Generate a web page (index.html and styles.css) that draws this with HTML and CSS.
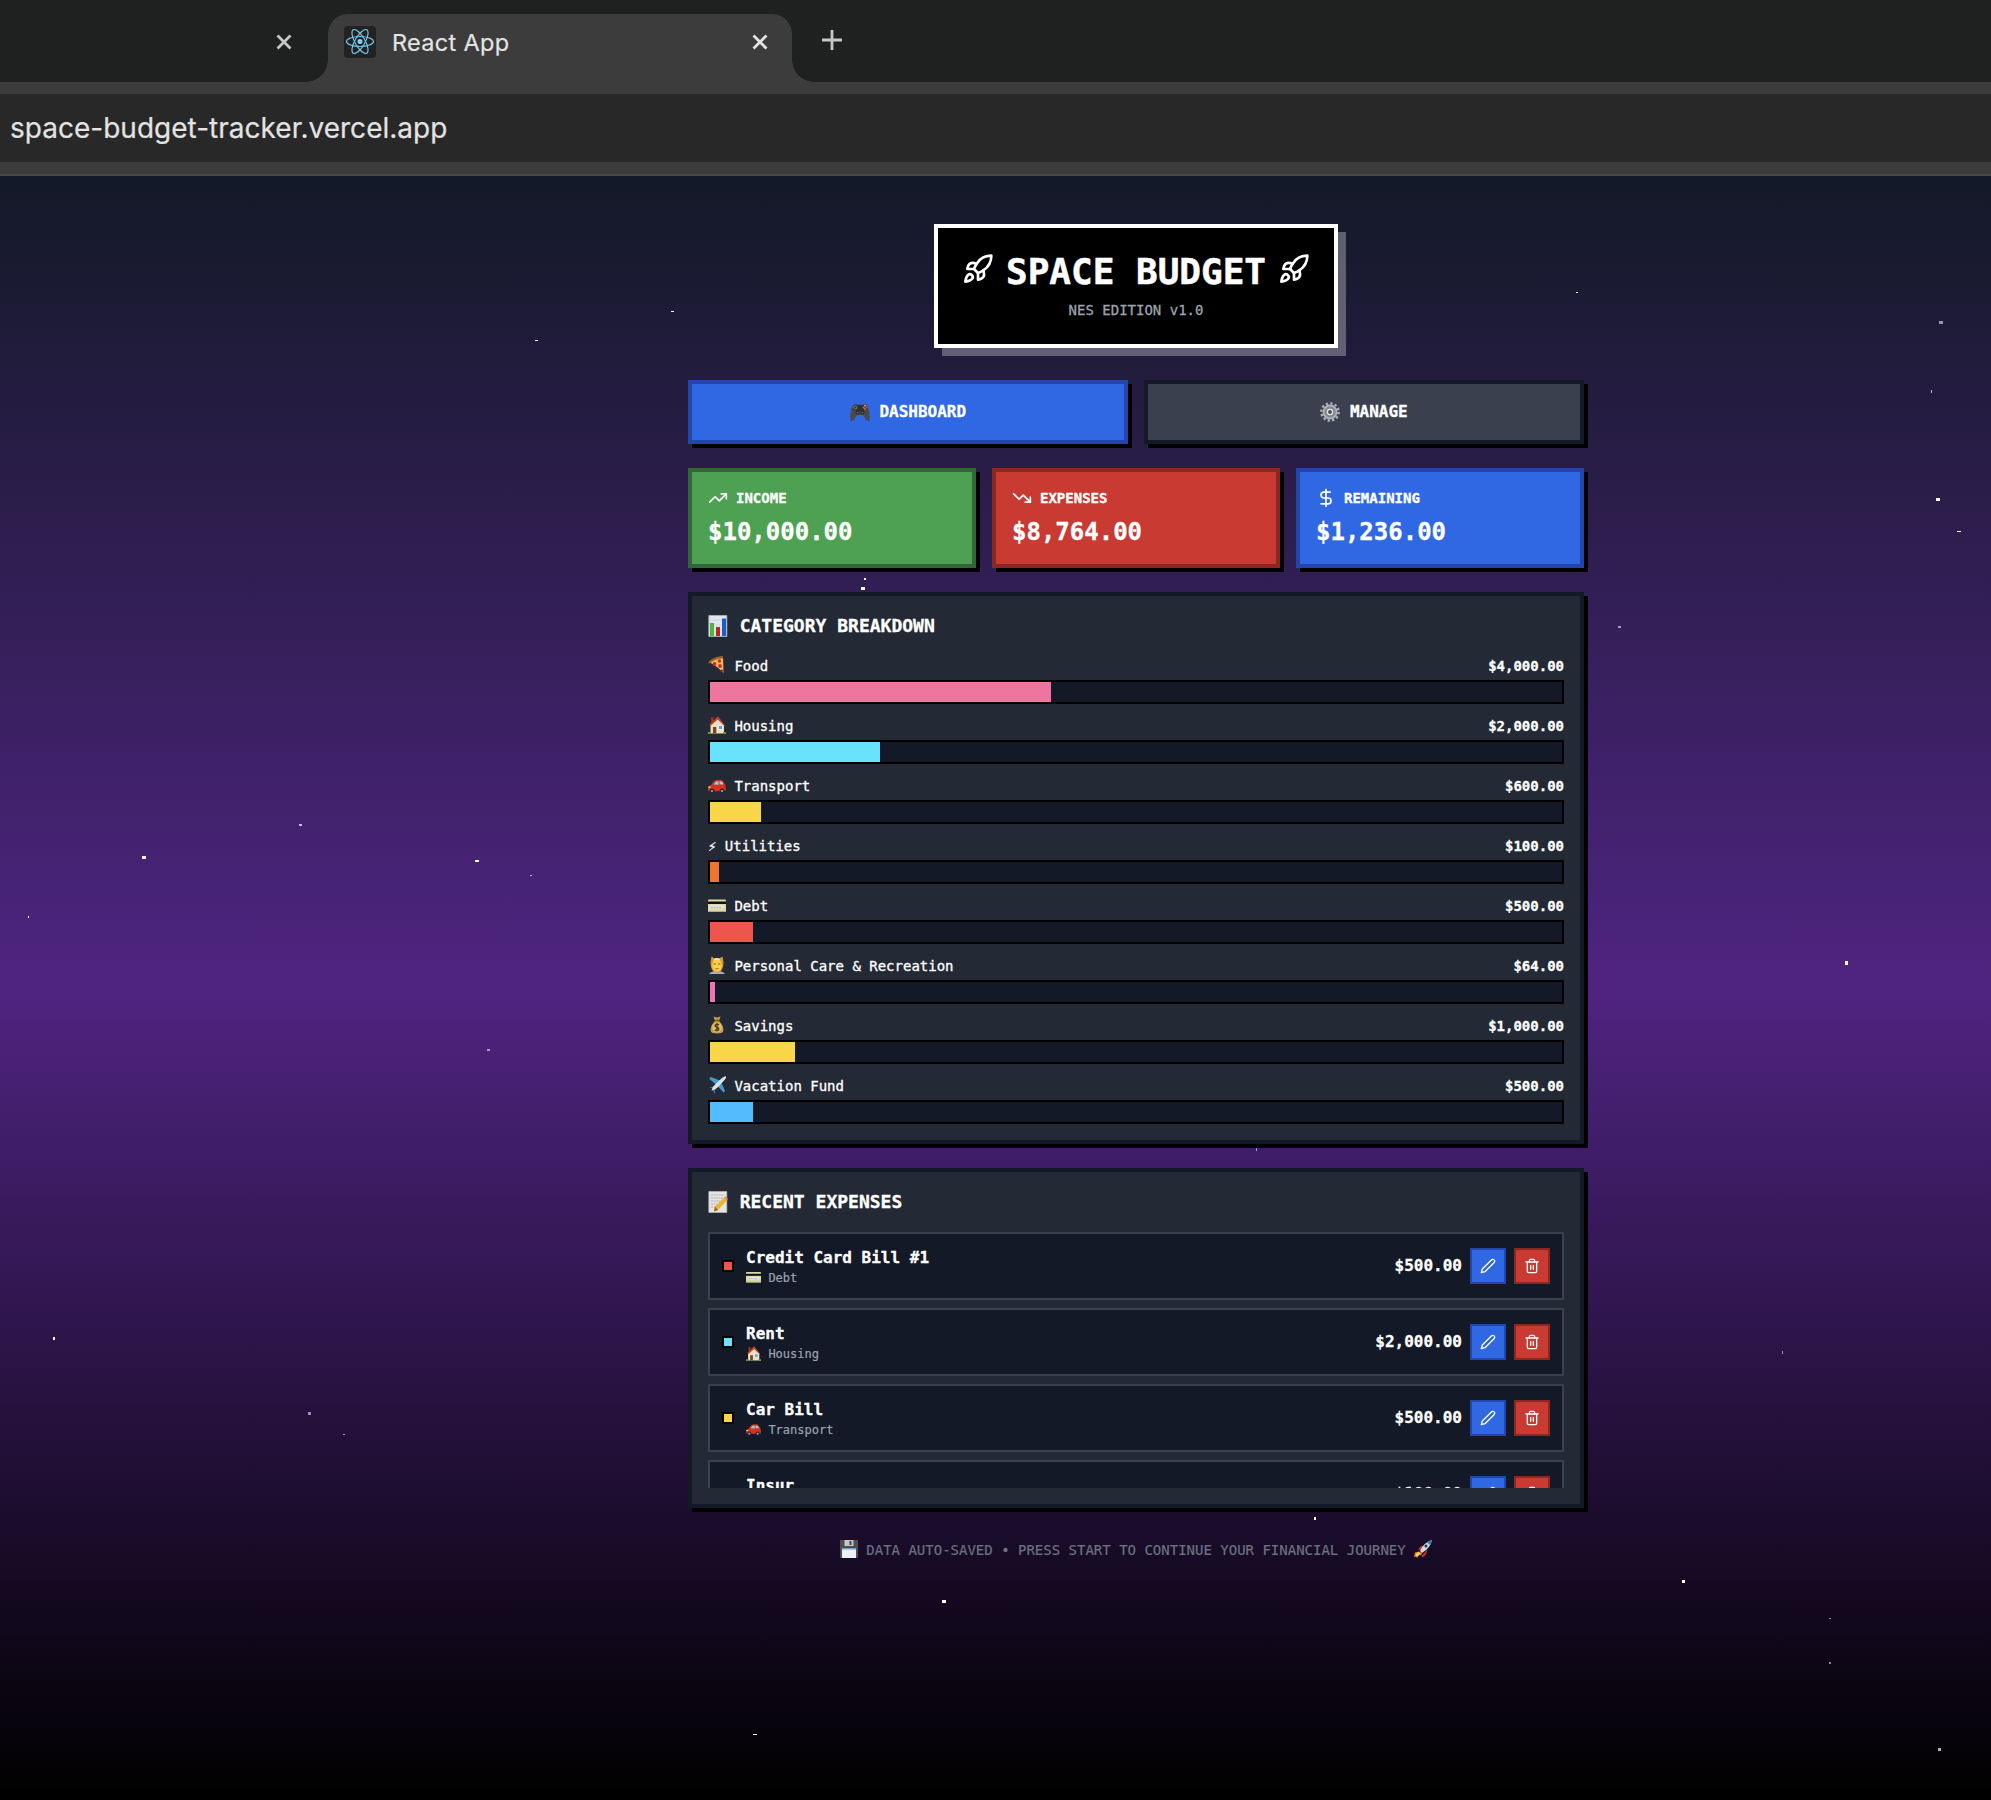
FILE: index.html
```html
<!DOCTYPE html>
<html lang="en">
<head>
<meta charset="utf-8">
<title>React App</title>
<link rel="stylesheet" href="styles.css">
</head>
<body>
<svg class="defs" width="0" height="0" aria-hidden="true">
  <symbol id="rocket" viewBox="0 0 24 24"><path d="M4.5 16.5c-1.5 1.26-2 5-2 5s3.74-.5 5-2c.71-.84.7-2.13-.09-2.91a2.18 2.18 0 0 0-2.91-.09z"/><path d="m12 15-3-3a22 22 0 0 1 2-3.95A12.88 12.88 0 0 1 22 2c0 2.72-.78 7.5-6 11a22.35 22.35 0 0 1-4 2z"/><path d="M9 12H4s.55-3.03 2-4c1.62-1.08 5 0 5 0"/><path d="M12 15v5s3.03-.55 4-2c1.08-1.62 0-5 0-5"/></symbol>
  <symbol id="up" viewBox="0 0 24 24"><path d="M22 7 13.5 15.5 8.5 10.5 2 17"/><path d="M16 7h6v6"/></symbol>
  <symbol id="down" viewBox="0 0 24 24"><path d="M22 17 13.5 8.5 8.5 13.5 2 7"/><path d="M16 17h6v-6"/></symbol>
  <symbol id="dollar" viewBox="0 0 24 24"><path d="M12 2v20"/><path d="M17 5H9.5a3.5 3.5 0 0 0 0 7h5a3.5 3.5 0 0 1 0 7H6"/></symbol>
  <symbol id="pencil" viewBox="0 0 24 24"><path d="M17 3a2.85 2.83 0 1 1 4 4L7.500 20.500 2 22l1.500-5.500Z"/></symbol>
  <symbol id="trash" viewBox="0 0 24 24"><path d="M3 6h18"/><path d="M19 6v14c0 1-1 2-2 2H7c-1 0-2-1-2-2V6"/><path d="M8 6V4c0-1 1-2 2-2h4c1 0 2 1 2 2v2"/><path d="M10 11v6M14 11v6"/></symbol>
  <symbol id="e-pad" viewBox="0 0 20 20"><path d="M4 2.500Q5 1.500 7 2.500h6Q15 1.500 16 2.500 18.500 4 19 9q1.300 6.500.5 9-1.500 2-3.500-.5L13 13H7l-3 4.500Q2 20 .5 18-.3 15 1 9 1.500 4 4 2.500Z" fill="#4a4a4c"/><path d="M4 3.300h12l1.500 4L13 9H7L2.500 7.300Z" fill="#303033"/><circle cx="5.300" cy="5.500" r="2" fill="#707478"/><circle cx="5.300" cy="5.500" r="1" fill="#333"/><circle cx="7.500" cy="10.500" r="2" fill="#222"/><circle cx="12.500" cy="10.500" r="2" fill="#222"/><circle cx="7.500" cy="10.500" r="1" fill="#66696c"/><circle cx="12.500" cy="10.500" r="1" fill="#66696c"/><circle cx="15" cy="3.800" r="1" fill="#d9a52c"/><circle cx="13.500" cy="5.400" r="1" fill="#4f8db9"/><circle cx="16.500" cy="5.400" r="1" fill="#dc5038"/><circle cx="15" cy="7" r="1" fill="#e4662c"/></symbol>
  <symbol id="e-gear" viewBox="0 0 20 20"><circle cx="10" cy="10" r="8.700" fill="none" stroke="#b3b4bc" stroke-width="2.300" stroke-dasharray="2.300 2.255"/><circle cx="10" cy="10" r="6.600" fill="#85878f" stroke="#b4b6be" stroke-width="1.800"/><circle cx="10" cy="10" r="2.600" fill="#4a4d58" stroke="#e6e7eb" stroke-width="1.300"/></symbol>
  <symbol id="e-chart" viewBox="0 0 20 22"><path d="M.8.500h18v21H.8z" fill="#dfe6ef" stroke="#a9b4c3" stroke-width=".8"/><path d="M1 5h18M1 10h18M1 15h18" stroke="#bdc8d6" stroke-width=".5"/><path d="M2 8h4v13H2z" fill="#4fb53b"/><path d="M8 12h4v9H8z" fill="#b42a20"/><path d="M14 3.500h4V21h-4z" fill="#1d5cc0"/></symbol>
  <symbol id="e-pizza" viewBox="0 0 18 18"><path d="M1 6Q7 .5 15 1l.5 16Q9 10 1 6Z" fill="#eebb62"/><path d="M0 6.500Q6 0 15 0v2.500Q7 2.500 2 7.500Z" fill="#a65e27"/><circle cx="6.500" cy="8" r="1.900" fill="#c53224"/><circle cx="11.500" cy="5" r="1.800" fill="#c53224"/><circle cx="12" cy="10" r="1.900" fill="#c53224"/><circle cx="14" cy="14.800" r="1.300" fill="#b52a1c"/></symbol>
  <symbol id="e-house" viewBox="0 0 18 18"><path d="M3 1h2.500v5H3z" fill="#983022"/><path d="M2.500 8 9.500 2l6.500 7v8.500H2.500Z" fill="#f0dfbd"/><path d="m1.500 8.500 7.500-7.500L10.500 1 17 9.500l-1 .3L9.800 3.500l-6.800 6Z" fill="#b8452e"/><path d="M5 11h3.300v6.500H5z" fill="#784526"/><path d="M10.500 9.500h4v4h-4z" fill="#5b9ed4" stroke="#fff" stroke-width=".7"/><path d="M0 16h3v2H0zM15 16h3v2h-3z" fill="#6c983c"/></symbol>
  <symbol id="e-car" viewBox="0 0 18 18"><path d="M0 12q0-3 3-4l3-4Q9 2 14 3l3 4q1.500 4 .5 7l-16 .5Q0 14 0 12Z" fill="#d8301f"/><path d="M5.500 7.500 8 4.500l2.500-.3v3.500ZM11.500 4.200q2 0 3 .8l1 2.500h-4Z" fill="#9ccadd"/><circle cx="4" cy="14" r="2.500" fill="#272a2e"/><circle cx="14" cy="14" r="2.500" fill="#272a2e"/><circle cx="4" cy="14" r="1.100" fill="#a2a8ad"/><circle cx="14" cy="14" r="1.100" fill="#a2a8ad"/><path d="M.3 9.500h2.300v1.300H.3z" fill="#f6e68c"/></symbol>
  <symbol id="e-card" viewBox="0 0 18 18"><rect y="2.500" width="18" height="12.500" rx="1" fill="#dcd9a8"/><path d="M0 4.500h18v2.500H0z" fill="#111"/><path d="M2 8.500h14v2.800H2z" fill="#e9ebe5"/><path d="M3 10.300h10" stroke="#879ad0" stroke-width=".8" stroke-dasharray="2 .7"/><path d="M0 14h18v1H0z" fill="#b0ad82"/></symbol>
  <symbol id="e-spa" viewBox="0 0 18 18"><path d="M1 18q2-3 8-3t8 3Z" fill="#a9b1ba"/><path d="M3.500.5 6 2h6L14.500.5 15.500 6q0 6-2.500 9-4 3-8 0-2.500-3-2.500-9Z" fill="#d7962e"/><ellipse cx="9" cy="9.300" rx="4.800" ry="6.500" fill="#f8cd4c"/><path d="M5 4.500Q9-.5 13 4.500L9 3.500Z" fill="#e9eef2"/><path d="M5.500 8h2.500M10 8h2.500M7.500 12.500q1.500.8 3 0" stroke="#935b19" stroke-width=".9" fill="none"/></symbol>
  <symbol id="e-bag" viewBox="0 0 18 18"><path d="M5.500.5 9 1.500 12.500.5 11 5q5 5 4.300 10-.3 2.500-6.300 2.500T2.700 15Q2 10 7 5Z" fill="#c39a46"/><path d="M6.500 4.500h5" stroke="#735019" stroke-width="1.300"/><ellipse cx="9" cy="11.500" rx="5" ry="5" fill="#dfbc68"/><path d="M11 9q-2-1.300-3.500-.3-1.200 1.500 1.500 2.500 2.500 1 1.500 2.700-1.500 1.300-3.700 0M9 7v8.500" stroke="#463b1e" stroke-width="1.300" fill="none"/></symbol>
  <symbol id="e-plane" viewBox="0 0 18 18"><path d="M1 2.500 3 1l9 3.500L14.500 9 17 15l-1.500 1.500L9.500 10Z" fill="#429ad3"/><path d="M1 11.500 4.500 12l1.500 5 1 .5L6.800 12 5.500 10.500Z" fill="#3684bf"/><path d="M3.500 14.500Q4 11 8 7.500L14 2q3-2.300 4-1.700T16.500 4L11 10q-3.500 4-7.500 4.500Z" fill="#dce4ea"/></symbol>
  <symbol id="e-memo" viewBox="0 0 20 22"><path d="M.8.500h18v21H.8z" fill="#e5e5e3" stroke="#b9b9b5" stroke-width=".7"/><path d="M3 4h13M3 7h12M3 10h9M3 13h6M3 16h4" stroke="#aaa" stroke-width=".9" stroke-dasharray="2 .6"/><path d="m7 15.500 9-9 3 3-9 9.500-4 1.500Z" fill="#edb52d"/><path d="m16 6.500 1.500-1.300 2.300 2.500L19 9.500Z" fill="#e77f79"/><path d="m7 15.500 3 3.500-4 1.500Z" fill="#8e6b38"/></symbol>
  <symbol id="e-disk" viewBox="0 0 18 18"><path d="M0 0h18v18H0z" fill="#4c4e50"/><path d="M4.500 0h9v6h-9z" fill="#c5c7c8"/><path d="M9.500 1h2v4h-2z" fill="#45474a"/><path d="M2 8h14v10H2z" fill="#f1f2f3"/><path d="M2 8h14v1.500H2z" fill="#64a4dd"/></symbol>
  <symbol id="e-rocket" viewBox="0 0 18 18"><path d="M4 9.500 7 6l5 0-4 5ZM7.500 16 12 11l0-2 1 2q-.5 4-4.500 6.500Z" fill="#c33422"/><path d="M6 11Q9 3 18 0 16.500 8 8 13Z" fill="#c9d9e5"/><path d="M13 2.500Q15 .8 18 0q-.5 3-2 5Z" fill="#3b79ac"/><circle cx="12" cy="6" r="1.500" fill="#34353c"/><path d="M5 11.500 1 12.500 0 17.500 2 16l1 2 2-3 2 .5 1-2.500Z" fill="#f28a22"/><path d="m5 12-3 2-.5 2.500Q5 16 6 13.500Z" fill="#ffda5a"/></symbol>
</svg>

<header class="chrome">
  <div class="tabstrip">
    <div class="tab-prev"><svg class="close" viewBox="0 0 16 16"><path d="M1.500 1.500l13 13M14.500 1.500l-13 13"/></svg></div>
    <div class="tab">
      <svg class="favicon" viewBox="0 0 32 32"><rect width="32" height="32" rx="4" fill="#222"/><g fill="none" stroke="#74cdee" stroke-width="1.150"><ellipse cx="16" cy="15.500" rx="13.500" ry="5"/><ellipse cx="16" cy="15.500" rx="13.500" ry="5" transform="rotate(60 16 15.500)"/><ellipse cx="16" cy="15.500" rx="13.500" ry="5" transform="rotate(120 16 15.500)"/></g><circle cx="16" cy="15.500" r="2.500" fill="#74d6f8"/></svg>
      <span class="tab-title">React App</span>
      <svg class="close" viewBox="0 0 16 16"><path d="M1.500 1.500l13 13M14.500 1.500l-13 13"/></svg>
    </div>
    <svg class="plus" viewBox="0 0 20 20"><path d="M10 0v20M0 10h20"/></svg>
  </div>
  <div class="address"><span class="url">space-budget-tracker.vercel.app</span></div>
</header>

<div class="viewport">
  <svg class="stars" width="1991" height="1624" viewBox="0 176 1991 1624" fill="#fff">
    <path d="M671 311h3v1h-3zM535 340h3v1h-3zM1576 292h2v1h-2zM1936 498h4v3h-4zM1957 531h4v1h-4zM864 578h2v2h-2zM861 587h4v3h-4zM142 856h4v3h-4zM475 860h4v2h-4zM28 916h1v2h-1zM1845 961h3v4h-3zM53 1337h2v3h-2zM1314 1517h2v3h-2zM942 1600h4v3h-4zM1682 1580h3v3h-3zM753 1734h4v1h-4z"/>
    <path opacity=".7" d="M299 824h3v2h-3zM530 875h2v1h-2zM1931 390h1v3h-1zM1938 1748h3v3h-3z"/>
    <path opacity=".55" d="M1939 321h4v3h-4zM1618 626h3v2h-3zM487 1049h3v2h-3zM1256 1148h1v3h-1zM308 1412h3v3h-3zM343 1434h2v1h-2zM1782 1351h1v3h-1zM1829 1618h2v1h-2zM1829 1662h2v2h-2z"/>
  </svg>
  <main class="app">
    <div class="title-box">
      <h1><svg class="ico rocket"><use href="#rocket"/></svg><span>SPACE BUDGET</span><svg class="ico rocket"><use href="#rocket"/></svg></h1>
      <p>NES EDITION v1.0</p>
    </div>

    <nav class="tabs">
      <button class="btn blue"><svg class="emoji"><use href="#e-pad"/></svg>DASHBOARD</button>
      <button class="btn gray"><svg class="emoji"><use href="#e-gear"/></svg>MANAGE</button>
    </nav>

    <section class="cards">
      <div class="card green"><div class="label"><svg class="ico"><use href="#up"/></svg>INCOME</div><div class="value">$10,000.00</div></div>
      <div class="card red"><div class="label"><svg class="ico"><use href="#down"/></svg>EXPENSES</div><div class="value">$8,764.00</div></div>
      <div class="card blue"><div class="label"><svg class="ico"><use href="#dollar"/></svg>REMAINING</div><div class="value">$1,236.00</div></div>
    </section>

    <section class="panel">
      <h2><svg class="emoji"><use href="#e-chart"/></svg>CATEGORY BREAKDOWN</h2>
      <div class="cats">
        <div class="cat"><div class="row"><span><svg class="emoji"><use href="#e-pizza"/></svg>Food</span><b>$4,000.00</b></div><div class="bar"><i class="pink" style="width:40%"></i></div></div>
        <div class="cat"><div class="row"><span><svg class="emoji"><use href="#e-house"/></svg>Housing</span><b>$2,000.00</b></div><div class="bar"><i class="cyan" style="width:20%"></i></div></div>
        <div class="cat"><div class="row"><span><svg class="emoji low"><use href="#e-car"/></svg>Transport</span><b>$600.00</b></div><div class="bar"><i class="yellow" style="width:6%"></i></div></div>
        <div class="cat"><div class="row"><span>⚡&#xFE0E; Utilities</span><b>$100.00</b></div><div class="bar"><i class="orange" style="width:1%"></i></div></div>
        <div class="cat"><div class="row"><span><svg class="emoji low"><use href="#e-card"/></svg>Debt</span><b>$500.00</b></div><div class="bar"><i class="coral" style="width:5%"></i></div></div>
        <div class="cat"><div class="row"><span><svg class="emoji"><use href="#e-spa"/></svg>Personal Care &amp; Recreation</span><b>$64.00</b></div><div class="bar"><i class="rose" style="width:.64%"></i></div></div>
        <div class="cat"><div class="row"><span><svg class="emoji"><use href="#e-bag"/></svg>Savings</span><b>$1,000.00</b></div><div class="bar"><i class="yellow" style="width:10%"></i></div></div>
        <div class="cat"><div class="row"><span><svg class="emoji"><use href="#e-plane"/></svg>Vacation Fund</span><b>$500.00</b></div><div class="bar"><i class="sky" style="width:5%"></i></div></div>
      </div>
    </section>

    <section class="panel">
      <h2><svg class="emoji"><use href="#e-memo"/></svg>RECENT EXPENSES</h2>
      <div class="list">
        <div class="item"><i class="dot coral"></i><div class="info"><b>Credit Card Bill #1</b><small><svg class="emoji"><use href="#e-card"/></svg>Debt</small></div><b class="amount">$500.00</b><button class="act blue"><svg class="ico"><use href="#pencil"/></svg></button><button class="act red"><svg class="ico"><use href="#trash"/></svg></button></div>
        <div class="item"><i class="dot cyan"></i><div class="info"><b>Rent</b><small><svg class="emoji"><use href="#e-house"/></svg>Housing</small></div><b class="amount">$2,000.00</b><button class="act blue"><svg class="ico"><use href="#pencil"/></svg></button><button class="act red"><svg class="ico"><use href="#trash"/></svg></button></div>
        <div class="item"><i class="dot yellow"></i><div class="info"><b>Car Bill</b><small><svg class="emoji"><use href="#e-car"/></svg>Transport</small></div><b class="amount">$500.00</b><button class="act blue"><svg class="ico"><use href="#pencil"/></svg></button><button class="act red"><svg class="ico"><use href="#trash"/></svg></button></div>
        <div class="item"><i class="dot yellow"></i><div class="info"><b>Insur</b></div><b class="amount">$100.00</b><button class="act blue"><svg class="ico"><use href="#pencil"/></svg></button><button class="act red"><svg class="ico"><use href="#trash"/></svg></button></div>
      </div>
    </section>

    <footer><svg class="emoji"><use href="#e-disk"/></svg>DATA AUTO-SAVED • PRESS START TO CONTINUE YOUR FINANCIAL JOURNEY<svg class="emoji"><use href="#e-rocket"/></svg></footer>
  </main>
</div>
</body>
</html>
```
FILE: styles.css
```css
* { box-sizing: border-box; margin: 0; }
body { width: 1991px; height: 1800px; overflow: hidden; background: #000; color: #fff; }
.defs { display: block; }

/* browser frame */
.chrome { height: 176px; background: #3c3c3c; border-bottom: 2px solid #484848; font-family: Inter, "Liberation Sans", sans-serif; color: #e3e3e3; -webkit-text-stroke: .2px; }
.tabstrip { height: 82px; background: #1f2120; display: flex; align-items: flex-start; }
.tab-prev { width: 328px; padding: 34px 36px 0 0; display: flex; justify-content: flex-end; color: #c7c7c7; }
.tab { position: relative; width: 464px; height: 68px; margin-top: 14px; padding: 0 24px 12px 16px; background: #3c3c3c; border-radius: 20px 20px 0 0; display: flex; align-items: center; }
.tab::before, .tab::after { content: ""; position: absolute; bottom: 0; width: 22px; height: 22px; }
.tab::before { left: -22px; background: radial-gradient(circle at 0 0, #1f2120 21.500px, #3c3c3c 22px); }
.tab::after { right: -22px; background: radial-gradient(circle at 100% 0, #1f2120 21.500px, #3c3c3c 22px); }
.favicon { width: 32px; height: 32px; }
.tab-title { flex: 1; padding-left: 16px; font-size: 23.500px; letter-spacing: .3px; }
.close { width: 16px; height: 16px; fill: none; stroke: currentColor; stroke-width: 2.800; }
.plus { width: 20px; height: 20px; margin: 30px 0 0 30px; fill: none; stroke: #c7c7c7; stroke-width: 2.800; }
.address { height: 68px; margin-top: 12px; padding-left: 10px; background: #282828; display: flex; align-items: center; }
.url { font-size: 28px; letter-spacing: .01px; }

/* page */
.viewport { position: relative; height: 1624px; overflow: hidden; background: linear-gradient(#131927, #4f2481 50%, #000); }
.stars { position: absolute; left: 0; top: 0; }
.app { position: relative; width: 896px; margin-left: 688px; padding-top: 48px; font: 14px/20px "DejaVu Sans Mono", monospace; -webkit-text-stroke: .3px; }
.ico { width: 20px; height: 20px; fill: none; stroke: #fff; stroke-width: 2; stroke-linecap: round; stroke-linejoin: round; }
.emoji { flex: none; }

.title-box { width: 404px; height: 124px; margin: 0 auto 32px; padding: 24px 0; background: #000; border: 4px solid #fff; box-shadow: 8px 8px 0 rgba(255,255,255,.3); text-align: center; }
.title-box h1 { display: flex; justify-content: center; gap: 12px; height: 40px; font-size: 36px; line-height: 39px; -webkit-text-stroke: .5px; }
.rocket { width: 32px; height: 32px; margin-top: 1px; }
.title-box p { margin-top: 8px; color: #9ca3af; }

.tabs { display: grid; grid-template-columns: 1fr 1fr; gap: 16px; margin-bottom: 24px; }
.btn { height: 64px; display: flex; align-items: center; justify-content: center; gap: 9.600px; border: 4px solid; box-shadow: 4px 4px 0 #000; color: #fff; font: bold 16px/24px "DejaVu Sans Mono", monospace; -webkit-text-stroke: .3px; }
.btn .emoji { width: 20px; height: 20px; }
.blue { background: #3067e3; border-color: #2345ac; }
.gray { background: #3a404e; border-color: #131926; }
.green { background: #4ea153; border-color: #31663a; }
.red { background: #c83a32; border-color: #8c2822; }

.cards { display: grid; grid-template-columns: repeat(3, 1fr); gap: 16px; margin-bottom: 24px; }
.card { height: 100px; padding: 16px; border-width: 4px; border-style: solid; box-shadow: 4px 4px 0 #000; font-weight: bold; }
.label { display: flex; gap: 8px; margin-bottom: 8px; }
.value { font-size: 24px; line-height: 32px; }

.panel { padding: 16px; margin-bottom: 24px; background: #232935; border: 4px solid #131926; box-shadow: 4px 4px 0 #000; }
.panel h2 { display: flex; align-items: center; gap: 11.700px; margin-bottom: 16px; font-size: 18px; line-height: 28px; }
.panel h2 .emoji { width: 20px; height: 22px; }
.cats { display: grid; gap: 12px; }
.row { display: flex; justify-content: space-between; margin-bottom: 4px; }
.row span { display: flex; align-items: center; white-space: pre; }
.row .emoji { width: 18px; height: 18px; margin: -2px 8.400px 0 0; }
.row .low { margin-top: 0; }
.bar { height: 24px; border: 2px solid #000; background: #131926; }
.bar i { display: block; height: 100%; }
.pink { background: #ee759d; }
.cyan { background: #68e3fe; }
.yellow { background: #f9d649; }
.orange { background: #f07630; }
.coral { background: #ee554d; }
.rose { background: #ed74b5; }
.sky { background: #55bcfb; }

.list { height: 256px; overflow: hidden; display: flex; flex-direction: column; gap: 8px; }
.item { flex: none; height: 68px; padding: 0 12px; border: 2px solid #3a404e; background: #131926; display: flex; align-items: center; }
.dot { width: 12px; height: 12px; margin-right: 12px; border: 2px solid #000; }
.item:last-child .dot { visibility: hidden; }
.info { flex: 1; height: 40px; }
.info b { display: block; font-size: 16px; line-height: 24px; }
.info small { display: flex; align-items: center; gap: 7.400px; font-size: 12px; line-height: 16px; color: #9ca3af; -webkit-text-stroke: .2px; }
.info .emoji { width: 15px; height: 15px; margin-top: -1px; }
.amount { font-size: 16px; line-height: 24px; }
.act { width: 36px; height: 36px; margin-left: 8px; padding: 0; border-width: 2px; border-style: solid; display: flex; align-items: center; justify-content: center; }
.act .ico { width: 16px; height: 16px; }

footer { margin-top: 32px; display: flex; justify-content: center; align-items: center; gap: 8.400px; color: #6b7280; white-space: nowrap; -webkit-text-stroke: .2px; }
footer .emoji { width: 18px; height: 18px; margin-top: -2px; }
```
